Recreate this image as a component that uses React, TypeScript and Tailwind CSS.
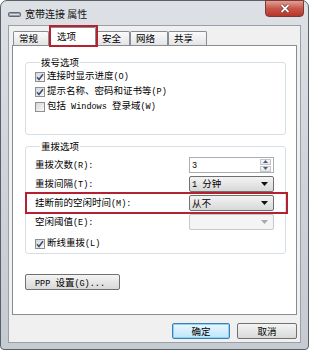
import React from "react";

function T({ s }: { s: string }) {
  const parts = s.split(/([\x20-\x7e]+)/).filter((p) => p.length > 0);
  return (
    <>
      {parts.map((p, i) =>
        /^[\x20-\x7e]+$/.test(p) ? (
          <span key={i} className="font-['Liberation_Mono',monospace] text-[8.5px] whitespace-pre">
            {p}
          </span>
        ) : (
          <span key={i}>{p}</span>
        )
      )}
    </>
  );
}

function Check({ checked, label }: { checked: boolean; label: string }) {
  return (
    <div className="flex items-center h-[15px] gap-[2px]">
      <span className="w-[10px] h-[10px] border border-[#8e8f8f] bg-gradient-to-br from-[#d6d6d6] to-[#fafafa] flex items-center justify-center shrink-0">
        {checked && (
          <svg width="8" height="8" viewBox="0 0 8 8">
            <path d="M1 4.2 L3 6.5 L7 1.2" stroke="#39507e" strokeWidth="1.6" fill="none" />
          </svg>
        )}
      </span>
      <span className="leading-[15px]">
        <T s={label} />
      </span>
    </div>
  );
}

function Arrow({ color }: { color: string }) {
  return (
    <svg width="7" height="4" viewBox="0 0 7 4">
      <path d="M0 0 L7 0 L3.5 4 Z" fill={color} />
    </svg>
  );
}

function Combo({ text, disabled }: { text?: string; disabled?: boolean }) {
  return (
    <div
      className={
        disabled
          ? "w-[85px] h-[16px] rounded-[2px] border border-[#c5c8cc] bg-[#f4f4f4] flex items-center justify-end pr-[5px]"
          : "w-[85px] h-[16px] rounded-[2px] border border-[#707070] bg-gradient-to-b from-[#f4f4f4] to-[#d8d8d8] flex items-center justify-between pl-[2px] pr-[5px]"
      }
    >
      {text && (
        <span className="leading-[14px]">
          <T s={text} />
        </span>
      )}
      <Arrow color={disabled ? "#a8a8a8" : "#111111"} />
    </div>
  );
}

function Spin() {
  return (
    <div className="w-[85px] h-[16px] border border-[#abadb3] bg-white flex items-center justify-between pl-[2px] pr-[2px]">
      <span className="leading-[14px]">
        <T s="3" />
      </span>
      <div className="flex flex-col gap-[1px] w-[11px]">
        <div className="h-[6px] border border-[#c3c6cb] bg-gradient-to-b from-[#fafafa] to-[#e6e6e6] flex items-center justify-center">
          <svg width="5" height="3" viewBox="0 0 5 3">
            <path d="M0 3 L5 3 L2.5 0 Z" fill="#4d5d7a" />
          </svg>
        </div>
        <div className="h-[6px] border border-[#c3c6cb] bg-gradient-to-b from-[#fafafa] to-[#e6e6e6] flex items-center justify-center">
          <svg width="5" height="3" viewBox="0 0 5 3">
            <path d="M0 0 L5 0 L2.5 3 Z" fill="#4d5d7a" />
          </svg>
        </div>
      </div>
    </div>
  );
}

function Row({ label, children, mark }: { label: string; children: React.ReactNode; mark?: boolean }) {
  return (
    <div className="relative flex items-center justify-between h-[16px]">
      <span className="leading-[16px]">
        <T s={label} />
      </span>
      {children}
      {mark && (
        <div className="absolute left-[-10px] right-[-14px] top-[-3px] bottom-[-3px] border-2 border-[#b3222e]" />
      )}
    </div>
  );
}

function Tab({ label, w }: { label: string; w: string }) {
  return (
    <div
      className={`${w} h-[14px] border border-b-0 border-[#898c95] rounded-t-[2px] bg-gradient-to-b from-[#fbfbfb] to-[#e4e4e4] pl-[5px] leading-[13px]`}
    >
      {label}
    </div>
  );
}

export default function App() {
  return (
    <div className="w-[309px] h-[350px] bg-white font-['Noto_Sans_CJK_SC',sans-serif] text-[9.5px] text-black">
      <div className="w-[309px] h-[350px] flex flex-col rounded-t-[7px] rounded-b-[4px] border border-[#5a6068] bg-gradient-to-b from-[#dde1e6] via-[#d0d4da] to-[#c6cbd1]">
        {/* title bar */}
        <div className="h-[24px] flex items-start justify-between pl-[7px] pr-[4px] shrink-0">
          <div className="flex items-center h-[24px] gap-[4px] pt-[2px]">
            <svg width="13" height="7" viewBox="0 0 13 7">
              <rect x="0.5" y="1.5" width="12" height="4" rx="1" fill="#9aa1ab" stroke="#5f6670" />
              <rect x="2" y="3" width="9" height="1" fill="#d8dde3" />
            </svg>
            <span className="text-[10px] text-[#141414] leading-[12px]">宽带连接 属性</span>
          </div>
          <div className="w-[39px] h-[17px] -mt-[1px] rounded-b-[4px] border border-[#7a3b38] bg-gradient-to-b from-[#e0a095] via-[#c7564a] to-[#b8342a] flex items-center justify-center">
            <svg width="10" height="9" viewBox="0 0 10 9">
              <path d="M1.5 1 L8.5 8 M8.5 1 L1.5 8" stroke="#5a1a16" strokeWidth="3" />
              <path d="M1.5 1 L8.5 8 M8.5 1 L1.5 8" stroke="#ffffff" strokeWidth="1.8" />
            </svg>
          </div>
        </div>
        {/* client */}
        <div className="flex-1 mx-[7px] mb-[6px] bg-[#f0f0f0] border border-[#9aa0a8] flex flex-col pt-[1px] pl-[3px] pr-[2px]">
          {/* tabs */}
          <div className="h-[18px] flex items-end pl-[1px] shrink-0">
            <Tab label="常规" w="w-[36px]" />
            <div className="relative z-10 w-[47px] h-[19px] -mb-[1px] border border-b-0 border-[#898c95] rounded-t-[2px] bg-white pl-[7px] leading-[17px]">
              选项
              <div className="absolute left-[-1px] right-[-3px] top-[-3px] bottom-[-1px] border-2 border-[#b3222e]" />
            </div>
            <Tab label="安全" w="w-[34px]" />
            <Tab label="网络" w="w-[38px]" />
            <Tab label="共享" w="w-[39px]" />
          </div>
          {/* panel */}
          <div className="h-[270px] w-[285px] border border-[#898c95] bg-white flex flex-col pt-[9px] pl-[12px] pr-[10px] shrink-0">
            <fieldset className="border border-[#d5dfe5] rounded-[3px] pl-[9px] pr-[11px] pb-[20px]">
              <legend className="ml-[5px] px-[1px] leading-[14px]">拨号选项</legend>
              <Check checked label="连接时显示进度(O)" />
              <Check checked label="提示名称、密码和证书等(P)" />
              <Check checked={false} label="包括 Windows 登录域(W)" />
            </fieldset>
            <fieldset className="mt-[4px] border border-[#d5dfe5] rounded-[3px] pl-[9px] pr-[11px] pt-[4px] pb-[2px]">
              <legend className="ml-[5px] px-[1px] leading-[14px]">重拨选项</legend>
              <div className="flex flex-col gap-[3px]">
                <Row label="重拨次数(R):">
                  <Spin />
                </Row>
                <Row label="重拨间隔(T):">
                  <Combo text="1 分钟" />
                </Row>
                <Row label="挂断前的空闲时间(M):" mark>
                  <Combo text="从不" />
                </Row>
                <Row label="空闲阈值(E):">
                  <Combo disabled />
                </Row>
              </div>
              <div className="mt-[6px]">
                <Check checked label="断线重拨(L)" />
              </div>
            </fieldset>
            <div className="mt-[20px]">
              <div className="w-[95px] h-[16px] rounded-[2px] border border-[#707070] bg-gradient-to-b from-[#f4f4f4] to-[#d9d9d9] pl-[9px] leading-[14px]">
                <T s="PPP 设置(G)..." />
              </div>
            </div>
          </div>
          {/* buttons */}
          <div className="flex justify-end gap-[7px] pt-[8px] pr-[1px]">
            <div className="w-[58px] h-[16px] rounded-[2px] border border-[#3c7fb1] bg-gradient-to-b from-[#eaf6fd] to-[#bee6fd] flex items-center justify-center leading-[14px] shadow-[inset_0_0_0_1px_#8ed3f5]">
              确定
            </div>
            <div className="w-[60px] h-[16px] rounded-[2px] border border-[#707070] bg-gradient-to-b from-[#f4f4f4] to-[#d9d9d9] flex items-center justify-center leading-[14px]">
              取消
            </div>
          </div>
        </div>
      </div>
    </div>
  );
}
